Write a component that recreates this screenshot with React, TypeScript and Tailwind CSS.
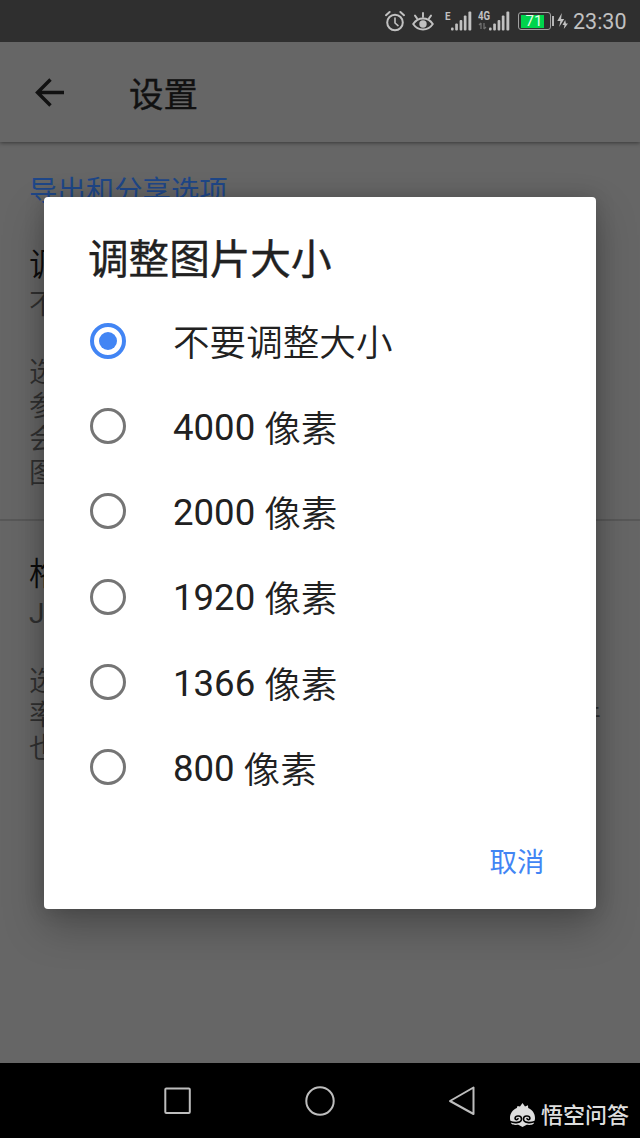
import React from "react";

const options = ["", "4000", "2000", "1920", "1366", "800"];

function AlarmIcon() {
  return (
    <svg className="h-[22px] w-[20px]" viewBox="0 0 20 22" fill="none" stroke="currentColor" strokeWidth="2" strokeLinecap="round">
      <circle cx="10" cy="12.5" r="7.8" />
      <path d="M10 8v5l3 2.6" strokeWidth="1.6" />
      <path d="M1 5.2 4.6 2M19 5.2 15.4 2" />
    </svg>
  );
}

function EyeIcon() {
  return (
    <svg className="h-[20px] w-[22px]" viewBox="0 0 22 20" fill="none" stroke="currentColor" strokeWidth="1.9" strokeLinecap="round">
      <path d="M1.2 13C6 5.6 16 5.6 20.8 13 16 20.4 6 20.4 1.2 13Z" />
      <circle cx="11" cy="13" r="3.7" fill="currentColor" stroke="none" />
      <path d="M11 2v4M3 4.6l2 2.8M19 4.6l-2 2.8" />
    </svg>
  );
}

function Bars() {
  return (
    <svg className="h-[22px] w-[21px] shrink-0" viewBox="0 0 21 22" fill="currentColor">
      <rect x="0" y="17.5" width="2.6" height="3" rx="1" />
      <rect x="4.2" y="13.5" width="2.7" height="7" rx="1" />
      <rect x="8.6" y="10" width="2.7" height="10.5" rx="1" />
      <rect x="12.8" y="5.5" width="2.7" height="15" rx="1" />
      <rect x="17.4" y="1.5" width="2.9" height="19" rx="1" />
    </svg>
  );
}

function Battery() {
  return (
    <div className="flex items-center">
      <div className="flex h-[18px] w-[33px] rounded-[3px] border-[1.5px] border-[#a0a0a0] p-[1.5px]">
        <div className="flex h-full w-[23px] items-center justify-center bg-[#00d44c] pt-px pl-[4px] text-[15px] leading-none text-[#e5ffe9]">71</div>
      </div>
      <div className="ml-[1px] h-[10px] w-[2px] bg-[#b5b5b5]" />
      <svg className="ml-[3px] h-[18px] w-[11px]" viewBox="0 0 11 18" fill="currentColor">
        <path d="M4.8 1 .3 9h3.1L2.2 15 7.2 7H4.1Z" />
        <path d="M8.2 8 5.5 13h2L6.8 17 11 11.5H8.9Z" />
      </svg>
    </div>
  );
}

function StatusBar() {
  return (
    <header className="flex h-[42px] shrink-0 items-center bg-[#2f2f2f] pl-[385px] text-[#c1c1c1]">
      <AlarmIcon />
      <div className="ml-[7px]"><EyeIcon /></div>
      <div className="ml-[11px] flex w-[33px]">
        <span className="w-[6px] origin-left scale-x-85 text-[11.5px] leading-[12px] font-bold">E</span>
        <Bars />
      </div>
      <div className="flex w-[32px]">
        <div className="flex w-[11px] flex-col">
          <span className="w-[15px] origin-left scale-x-80 text-[12px] leading-[12px] font-bold">4G</span>
          <svg className="h-[8px] w-[9px]" viewBox="0 0 9 8" fill="none" stroke="#707070" strokeWidth="1.3">
            <path d="M3 1v6M1 3l2-2M6 1v6M8 5 6 7" />
          </svg>
        </div>
        <Bars />
      </div>
      <div className="ml-[8px]"><Battery /></div>
      <span className="ml-[5px] pt-[2px] text-[21.5px] leading-none whitespace-nowrap">23:30</span>
    </header>
  );
}

function SettingsPage() {
  return (
    <main className="flex min-h-0 flex-1 flex-col overflow-hidden bg-[#666]">
      <div className="z-10 flex h-[100px] shrink-0 items-center bg-[#666] pl-[35px] shadow-[0_1px_4px_rgba(0,0,0,0.45)]">
        <svg className="h-[30px] w-[30px]" viewBox="0 0 30 30" fill="none" stroke="#111" strokeWidth="3.4">
          <path d="M29 15.5H3M15.5 2.5 2.5 15.5l13 13" />
        </svg>
        <h1 className="ml-[64px] pt-[7px] text-[34.5px] leading-none text-[#111] [-webkit-text-stroke:0.4px_#111]">设置</h1>
      </div>
      <div className="px-[29px] pt-[35px] whitespace-nowrap text-[#303030]">
        <h2 className="h-[30px] text-[28.4px] leading-[30px] text-[#1f4788]">导出和分享选项</h2>
        <h3 className="mt-[39px] h-[38px] text-[32px] leading-[38px] font-[350] text-[#0c0c0c]">调整图片大小</h3>
        <p className="mt-[4px] h-[34px] text-[28px] leading-[34px] font-[350]">不要调整大小</p>
        <div className="mt-[34px] text-[28px] leading-[33.7px] font-[350]">
          <p>选择图片大小</p>
          <p>参考</p>
          <p>会调整</p>
          <p>图片</p>
        </div>
      </div>
      <hr className="mt-[28px] border-t-2 border-[#585858]" />
      <div className="px-[29px] pt-[34px] whitespace-nowrap text-[#303030]">
        <h3 className="h-[38px] text-[32px] leading-[38px] font-[350] text-[#0c0c0c]">格式和画质</h3>
        <p className="mt-[4px] h-[34px] text-[28px] leading-[34px]">JPG</p>
        <div className="mt-[34px] w-[572px] text-[28px] leading-[33.7px] font-[350]">
          <p>选择格式</p>
          <p className="flex justify-between"><span>率</span><span>件</span></p>
          <p>也</p>
        </div>
      </div>
    </main>
  );
}

function ResizeDialog() {
  return (
    <section
      role="dialog"
      className="absolute top-[197px] left-[44px] z-20 flex h-[712px] w-[551.5px] flex-col rounded-[4px] bg-white text-[#212121] shadow-[0_18px_40px_rgba(0,0,0,0.26),0_0_20px_rgba(0,0,0,0.16)]"
    >
      <h2 className="mt-[38px] ml-[44px] text-[40.6px] leading-[50px] [-webkit-text-stroke:0.4px_#212121]">调整图片大小</h2>
      <div className="mt-[13px] flex flex-col">
        {options.map((value, i) => (
          <label key={i} className="flex h-[85.3px] items-center pl-[46px]">
            <span
              className={
                i === 0
                  ? "flex size-[36px] items-center justify-center rounded-full border-4 border-[#4285f4]"
                  : "size-[36px] rounded-full border-[3.5px] border-[#757575]"
              }
            >
              {i === 0 && <span className="size-[18px] rounded-full bg-[#4285f4]" />}
            </span>
            <span className="ml-[47px] pt-[4px] text-[36.6px] leading-none whitespace-pre">
              {value}
              <span className="relative top-[2px] font-[350]">{value ? " 像素" : "不要调整大小"}</span>
            </span>
          </label>
        ))}
      </div>
      <button className="mt-[37px] mr-[51px] self-end text-[27.5px] leading-[32px] text-[#4285f4]">取消</button>
    </section>
  );
}

function NavBar() {
  return (
    <footer className="relative flex h-[75px] shrink-0 items-center bg-black text-[#bdbdbd]">
      <svg className="ml-[163px] size-[30px]" viewBox="0 0 30 30" fill="none" stroke="currentColor" strokeWidth="2">
        <rect x="2.3" y="2.5" width="24.5" height="24.5" rx="1" />
      </svg>
      <svg className="ml-[112px] size-[30px]" viewBox="0 0 30 30" fill="none" stroke="currentColor" strokeWidth="2">
        <circle cx="15" cy="15" r="13.7" />
      </svg>
      <svg className="ml-[113px] size-[30px]" viewBox="0 0 30 30" fill="none" stroke="currentColor" strokeWidth="2" strokeLinejoin="round">
        <path d="M25.5 1.5v26.5L2 15Z" />
      </svg>
      <div className="absolute top-[37px] left-[509px] flex items-center text-[#dedede]">
        <svg className="h-[25px] w-[27px]" viewBox="0 0 27 25">
          <path
            fill="currentColor"
            d="M13.5 0 16 3.5 19 2.2 19.2 5C23.5 7 26 10.5 26 15c0 2-.5 3-1 4.5 0 2.5-4.5 2.7-7.3 2.3L13.5 24l-4.2-2.2C6.5 22.2 2 22 2 19.5 1.5 18 1 17 1 15 1 10.5 3.5 7 7.8 5L8.5 3 11 3.5Z"
          />
          <path
            fill="none"
            stroke="#000"
            strokeWidth="1.6"
            strokeLinecap="round"
            d="M1 18.5c5 2 11.5 1.2 11.5-2.6 0-3.8-6-3.8-6.4-.8-.2 1.7 2.2 2.2 2.9.6M26 18.5c-5 2-11.5 1.2-11.5-2.6 0-3.8 6-3.8 6.4-.8.2 1.7-2.2 2.2-2.9.6"
          />
        </svg>
        <span className="ml-[5px] pt-[2px] text-[22px] leading-[28px] font-medium whitespace-nowrap">悟空问答</span>
      </div>
    </footer>
  );
}

export default function App() {
  return (
    <div
      className="relative flex h-[1138px] w-[640px] flex-col overflow-hidden bg-[#666]"
      style={{ fontFamily: 'Roboto, "Noto Sans CJK SC", sans-serif' }}
    >
      <StatusBar />
      <SettingsPage />
      <NavBar />
      <ResizeDialog />
    </div>
  );
}
